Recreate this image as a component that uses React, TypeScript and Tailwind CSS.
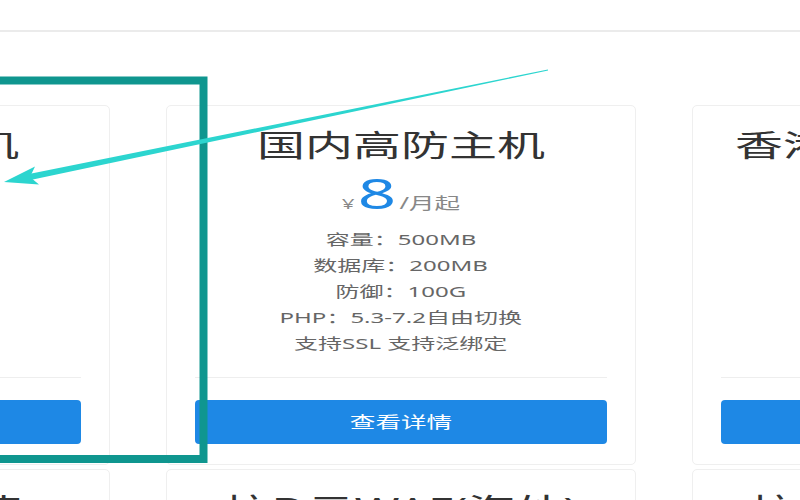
import type { ReactNode } from "react";

const SPECS = ["容量：500MB", "数据库：200MB", "防御：100G", "PHP：5.3-7.2自由切换", "支持SSL 支持泛绑定"];

const ROW1 = [
  { title: "国内虚拟主机", price: "5" },
  { title: "国内高防主机", price: "8" },
  { title: "香港高防虚拟主机", price: "10" },
];

const ROW2 = [
  { title: "高防CDN加速", price: "30" },
  { title: "抗D云WAF(海外)", price: "99" },
  { title: "抗D云WAF(国内)", price: "99" },
];

// the shot is stretched sideways, so text gets the same stretch
function Wide({ children, className = "" }: { children: ReactNode; className?: string }) {
  return <span className={`inline-block scale-x-[1.6] whitespace-nowrap ${className}`}>{children}</span>;
}

function PlanCard({ title, price }: { title: string; price: string }) {
  return (
    <div className="flex w-[470px] shrink-0 flex-col rounded-[5px] border border-[#efefef] bg-white px-[28px] pt-[21px] pb-[20px]">
      <div className="h-[36px] text-center text-[30px] leading-[36px] text-[#333]">
        <Wide>{title}</Wide>
      </div>

      <div className="mt-[9px] flex h-[42px] justify-center">
        <Wide className="flex items-baseline">
          <span className="text-[14px] leading-none text-[#888]">¥</span>
          <span className="ml-[2px] text-[42px] leading-[42px] text-[#1e88e5]">{price}</span>
          <span className="ml-[2px] text-[16px] leading-none text-[#888]">/月起</span>
        </Wide>
      </div>

      <div className="mt-[12px] flex flex-col text-center text-[15px] leading-[26px] text-[#666]">
        {SPECS.map((s) => (
          <div key={s}>
            <Wide>{s}</Wide>
          </div>
        ))}
      </div>

      <div className="mt-[21px] h-px bg-[#eeeeee]" />

      <button className="mt-[22px] flex h-[44px] items-center justify-center rounded-[4px] bg-[#1e88e5] text-[16px] text-white">
        <Wide>查看详情</Wide>
      </button>
    </div>
  );
}

export default function App() {
  return (
    <div className="relative h-[500px] w-[800px] overflow-hidden bg-white font-['Noto_Sans','Noto_Sans_CJK_SC',sans-serif]">
      <div className="h-[32px] border-b-2 border-[#ebebeb]" />

      <div className="-ml-[360px] flex flex-col gap-[4px] pt-[73px]">
        <div className="flex gap-[56px]">
          {ROW1.map((c) => (
            <PlanCard key={c.title} title={c.title} price={c.price} />
          ))}
        </div>
        <div className="flex gap-[56px]">
          {ROW2.map((c) => (
            <PlanCard key={c.title} title={c.title} price={c.price} />
          ))}
        </div>
      </div>

      {/* annotation: teal frame and arrow drawn over the page */}
      <svg className="pointer-events-none absolute inset-0" width="800" height="500" viewBox="0 0 800 500">
        <rect x="-20" y="80.5" width="223.5" height="378.5" fill="none" stroke="#0f968f" strokeWidth="8" />
        <polygon points="30.5,180 29,174 547.9,69.5 548.1,70.5" fill="#2cd5cf" />
        <polygon points="4,182 35,166.5 30,177 39,184.5" fill="#2cd5cf" />
      </svg>
    </div>
  );
}
